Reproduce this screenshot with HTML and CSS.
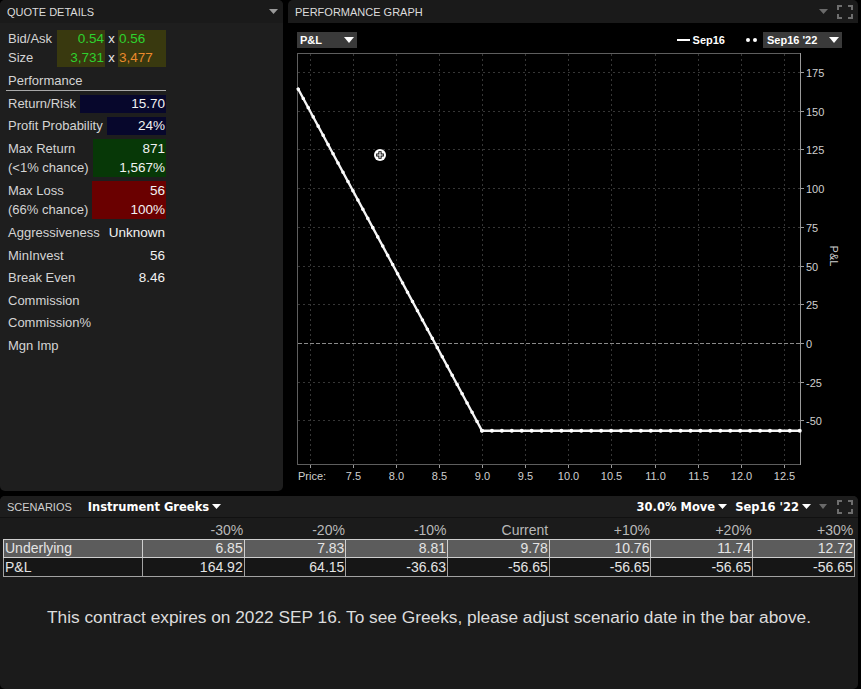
FILE: index.html
```html
<!DOCTYPE html>
<html>
<head>
<meta charset="utf-8">
<link rel="stylesheet" href="styles.css">
</head>
<body>
<div class="app">
  <div class="top">
    <section class="panel quote">
      <header class="phead">
        <span class="ptitle">QUOTE DETAILS</span>
        <svg class="tri gray" width="9" height="5" viewBox="0 0 9 5"><polygon points="0,0 9,0 4.5,5"/></svg>
      </header>
      <div class="qbody">
        <div class="ba">
          <span class="ba-l r1">Bid/Ask</span>
          <span class="ba-l r2">Size</span>
          <div class="ob ob-l"><span class="up">0.54</span><span class="up">3,731</span></div>
          <div class="bx"><span>x</span><span>x</span></div>
          <div class="ob ob-r"><span class="up">0.56</span><span class="dn">3,477</span></div>
        </div>
        <div class="perf">Performance</div>
        <div class="rows">
          <div class="row"><span class="lbl">Return/Risk</span><span class="val navy">15.70</span></div>
          <div class="row"><span class="lbl">Profit Probability</span><span class="val navy">24%</span></div>
          <div class="row two"><span class="lbl">Max Return<br>(&lt;1% chance)</span><span class="val green">871<br>1,567%</span></div>
          <div class="row two"><span class="lbl">Max Loss<br>(66% chance)</span><span class="val red">56<br>100%</span></div>
          <div class="row plain"><span class="lbl">Aggressiveness</span><span class="val">Unknown</span></div>
          <div class="row plain"><span class="lbl">MinInvest</span><span class="val">56</span></div>
          <div class="row plain"><span class="lbl">Break Even</span><span class="val">8.46</span></div>
          <div class="row plain"><span class="lbl">Commission</span><span class="val"></span></div>
          <div class="row plain"><span class="lbl">Commission%</span><span class="val"></span></div>
          <div class="row plain"><span class="lbl">Mgn Imp</span><span class="val"></span></div>
        </div>
      </div>
    </section>

    <section class="panel graph">
      <header class="phead">
        <span class="ptitle">PERFORMANCE GRAPH</span>
        <svg class="tri dim" width="9" height="5" viewBox="0 0 9 5"><polygon points="0,0 9,0 4.5,5"/></svg>
        <svg class="expand" width="16" height="14" viewBox="0 0 16 14"><path d="M1 5V1H5M11 1H15V5M15 9V13H11M5 13H1V9" fill="none" stroke="#6e6e6e" stroke-width="2"/></svg>
      </header>
      <div class="gbody">
        <div class="controls">
          <div class="dd pl">P&amp;L<svg class="tri white" width="10" height="6" viewBox="0 0 10 6"><polygon points="0,0 10,0 5,6"/></svg></div>
          <div class="legend">
            <span class="lline"></span><span class="ltext">Sep16</span>
            <span class="ldots"><i></i><i></i></span>
            <div class="dd dt">Sep16 '22<svg class="tri white" width="10" height="6" viewBox="0 0 10 6"><polygon points="0,0 10,0 5,6"/></svg></div>
          </div>
        </div>
        <svg class="plot" width="570" height="439" viewBox="288 52 570 439">
          <g stroke="#363636" stroke-width="1" stroke-dasharray="2 3">
            <line x1="310.5" y1="55" x2="310.5" y2="465"/>
            <line x1="353.5" y1="55" x2="353.5" y2="465"/>
            <line x1="396.5" y1="55" x2="396.5" y2="465"/>
            <line x1="439.5" y1="55" x2="439.5" y2="465"/>
            <line x1="482.5" y1="55" x2="482.5" y2="465"/>
            <line x1="525.5" y1="55" x2="525.5" y2="465"/>
            <line x1="568.5" y1="55" x2="568.5" y2="465"/>
            <line x1="611.5" y1="55" x2="611.5" y2="465"/>
            <line x1="655.5" y1="55" x2="655.5" y2="465"/>
            <line x1="698.5" y1="55" x2="698.5" y2="465"/>
            <line x1="741.5" y1="55" x2="741.5" y2="465"/>
            <line x1="784.5" y1="55" x2="784.5" y2="465"/>
            <line x1="298" y1="73.5" x2="800" y2="73.5"/>
            <line x1="298" y1="112.5" x2="800" y2="112.5"/>
            <line x1="298" y1="150.5" x2="800" y2="150.5"/>
            <line x1="298" y1="189.5" x2="800" y2="189.5"/>
            <line x1="298" y1="228.5" x2="800" y2="228.5"/>
            <line x1="298" y1="267.5" x2="800" y2="267.5"/>
            <line x1="298" y1="305.5" x2="800" y2="305.5"/>
            <line x1="298" y1="383.5" x2="800" y2="383.5"/>
            <line x1="298" y1="421.5" x2="800" y2="421.5"/>
          </g>
          <line x1="298" y1="344.5" x2="800" y2="344.5" stroke="#8a8a8a" stroke-width="1" stroke-dasharray="4 2"/>
          <rect x="297.5" y="54.5" width="503" height="411" fill="none" stroke="#5e5e5e"/>
          <line x1="800.5" y1="54" x2="800.5" y2="466" stroke="#9a9a9a"/>
          <g stroke="#9a9a9a" stroke-width="1">
            <line x1="801" y1="73.5" x2="804" y2="73.5"/>
            <line x1="801" y1="112.5" x2="804" y2="112.5"/>
            <line x1="801" y1="150.5" x2="804" y2="150.5"/>
            <line x1="801" y1="189.5" x2="804" y2="189.5"/>
            <line x1="801" y1="228.5" x2="804" y2="228.5"/>
            <line x1="801" y1="267.5" x2="804" y2="267.5"/>
            <line x1="801" y1="305.5" x2="804" y2="305.5"/>
            <line x1="801" y1="344.5" x2="804" y2="344.5"/>
            <line x1="801" y1="383.5" x2="804" y2="383.5"/>
            <line x1="801" y1="421.5" x2="804" y2="421.5"/>
            <line x1="310.5" y1="466" x2="310.5" y2="469"/>
            <line x1="353.5" y1="466" x2="353.5" y2="469"/>
            <line x1="396.5" y1="466" x2="396.5" y2="469"/>
            <line x1="439.5" y1="466" x2="439.5" y2="469"/>
            <line x1="482.5" y1="466" x2="482.5" y2="469"/>
            <line x1="525.5" y1="466" x2="525.5" y2="469"/>
            <line x1="568.5" y1="466" x2="568.5" y2="469"/>
            <line x1="611.5" y1="466" x2="611.5" y2="469"/>
            <line x1="655.5" y1="466" x2="655.5" y2="469"/>
            <line x1="698.5" y1="466" x2="698.5" y2="469"/>
            <line x1="741.5" y1="466" x2="741.5" y2="469"/>
            <line x1="784.5" y1="466" x2="784.5" y2="469"/>
          </g>
          <g class="ax">
            <text x="806" y="78">175</text>
            <text x="806" y="117">150</text>
            <text x="806" y="155">125</text>
            <text x="806" y="194">100</text>
            <text x="806" y="233">75</text>
            <text x="806" y="272">50</text>
            <text x="806" y="310">25</text>
            <text x="806" y="349">0</text>
            <text x="806" y="388">-25</text>
            <text x="806" y="426">-50</text>
          </g>
          <g class="ax mid">
            <text x="353.5" y="481">7.5</text>
            <text x="396.5" y="481">8.0</text>
            <text x="439.5" y="481">8.5</text>
            <text x="482.5" y="481">9.0</text>
            <text x="525.5" y="481">9.5</text>
            <text x="568.5" y="481">10.0</text>
            <text x="611.5" y="481">10.5</text>
            <text x="655.5" y="481">11.0</text>
            <text x="698.5" y="481">11.5</text>
            <text x="741.5" y="481">12.0</text>
            <text x="784.5" y="481">12.5</text>
          </g>
          <text class="ax" x="298" y="481">Price:</text>
          <text class="ax mid" x="830" y="265" transform="rotate(90 834 261)">P&amp;L</text>
          <polyline points="297.5,88.7 482,431.7 800,431.7" fill="none" stroke="#f4f4f4" stroke-width="2.4" stroke-linejoin="round"/>
          <path d="M482 431.7 L800 431.7" fill="none" stroke="#ffffff" stroke-width="4" stroke-linecap="round" stroke-dasharray="0 9.93"/>
          <path d="M482 431.7 L297.5 88.7" fill="none" stroke="#ffffff" stroke-width="3.6" stroke-linecap="round" stroke-dasharray="0 10.48"/>
          <circle cx="380" cy="156" r="6" fill="#fff"/>
          <path d="M380 152.2V159.8M376.2 156H383.8" stroke="#000" stroke-width="3.2"/>
          <path d="M380 153V159M377 156H383" stroke="#fff" stroke-width="1.2"/>
        </svg>
      </div>
    </section>
  </div>

  <section class="panel scen">
    <header class="shead">
      <span class="stitle">SCENARIOS</span>
      <span class="sdrop first">Instrument Greeks<svg class="tri white" width="9" height="5" viewBox="0 0 9 5"><polygon points="0,0 9,0 4.5,5"/></svg></span>
      <span class="spacer"></span>
      <span class="sdrop">30.0% Move<svg class="tri white" width="9" height="5" viewBox="0 0 9 5"><polygon points="0,0 9,0 4.5,5"/></svg></span>
      <span class="sdrop">Sep16 '22<svg class="tri white" width="9" height="5" viewBox="0 0 9 5"><polygon points="0,0 9,0 4.5,5"/></svg></span>
      <svg class="tri dim sm" width="8" height="5" viewBox="0 0 8 5"><polygon points="0,0 8,0 4,5"/></svg>
      <svg class="expand" width="16" height="14" viewBox="0 0 16 14"><path d="M1 5V1H5M11 1H15V5M15 9V13H11M5 13H1V9" fill="none" stroke="#6e6e6e" stroke-width="2"/></svg>
    </header>
    <table class="stable">
      <colgroup><col class="c0"><col class="c"><col class="c"><col class="c"><col class="c"><col class="c"><col class="c"><col class="c"></colgroup>
      <tr class="hrow"><td></td><td>-30%</td><td>-20%</td><td>-10%</td><td>Current</td><td>+10%</td><td>+20%</td><td>+30%</td></tr>
      <tr class="urow"><td>Underlying</td><td>6.85</td><td>7.83</td><td>8.81</td><td>9.78</td><td>10.76</td><td>11.74</td><td>12.72</td></tr>
      <tr class="prow"><td>P&amp;L</td><td>164.92</td><td>64.15</td><td>-36.63</td><td>-56.65</td><td>-56.65</td><td>-56.65</td><td>-56.65</td></tr>
    </table>
    <p class="msg">This contract expires on 2022 SEP 16. To see Greeks, please adjust scenario date in the bar above.</p>
  </section>
</div>
</body>
</html>
```
FILE: styles.css
```css
html, body {
  margin: 0;
  padding: 0;
  background: #000;
}
body {
  width: 861px;
  height: 689px;
  overflow: hidden;
  font-family: "Liberation Sans", Arial, sans-serif;
  color: #d4d4d4;
}
.app {
  display: flex;
  flex-direction: column;
  gap: 5px;
  padding-right: 3px;
}
.top {
  display: flex;
  gap: 5px;
  height: 491px;
}
.panel {
  border-radius: 5px;
  overflow: hidden;
  display: flex;
  flex-direction: column;
}
.quote {
  width: 283px;
  background: #1e1e1e;
}
.graph {
  flex: 1;
  background: #000;
}
.phead {
  height: 23px;
  flex: none;
  background: #1a1a1a;
  display: flex;
  align-items: center;
  padding: 0 5px 0 7px;
  font-size: 11px;
  color: #dcdcdc;
}
.ptitle {
  flex: 1;
  padding-top: 1px;
}
.tri {
  display: block;
  flex: none;
}
.tri.gray { fill: #9a9a9a; }
.tri.dim { fill: #6a6a6a; }
.tri.white { fill: #fff; }
.graph .phead .tri.dim { margin-right: 9px; }
.expand { display: block; flex: none; }

/* quote body */
.qbody {
  padding: 7px 0 0 8px;
  width: 158px;
}
.ba {
  display: grid;
  grid-template-columns: 49px 48px 13px 48px;
  grid-template-rows: 18.5px 18.5px;
  font-size: 13px;
}
.ba-l { grid-column: 1; line-height: 18.5px; }
.ba-l.r1 { grid-row: 1; }
.ba-l.r2 { grid-row: 2; }
.ob {
  grid-row: 1 / 3;
  background: #39390f;
  display: flex;
  flex-direction: column;
  font-size: 13.5px;
  line-height: 18.5px;
}
.ob-l { grid-column: 2; text-align: right; padding-right: 1px; }
.ob-r { grid-column: 4; text-align: left; padding-left: 1px; }
.bx {
  grid-column: 3;
  grid-row: 1 / 3;
  display: flex;
  flex-direction: column;
  align-items: center;
  line-height: 18.5px;
  font-size: 13px;
  color: #e8e8e8;
}
.up { color: #2ed12e; }
.dn { color: #ea8a2c; }
.perf {
  margin: 5px 0 0 -2px;
  padding-left: 2px;
  font-size: 13px;
  line-height: 18px;
  border-bottom: 1px solid #a8a8a8;
}
.rows {
  display: flex;
  flex-direction: column;
  gap: 4px;
  margin-top: 4px;
}
.row {
  display: flex;
  font-size: 13px;
  line-height: 18px;
}
.row.two { line-height: 19px; }
.row.plain { height: 18.6px; line-height: 19px; }
.lbl { white-space: nowrap; }
.val {
  flex: 1;
  margin-left: 4px;
  text-align: right;
  padding-right: 1px;
  font-size: 13.5px;
  color: #f2f2f2;
}
.val.navy { background: #07072c; }
.val.green { background: #073807; }
.val.red { background: #6a0000; }

/* graph body */
.gbody {
  display: flex;
  flex-direction: column;
}
.controls {
  display: flex;
  justify-content: space-between;
  align-items: center;
  padding: 9px 16px 0 9px;
  height: 16px;
}
.dd {
  height: 16px;
  background: #3a3a3a;
  display: flex;
  align-items: center;
  justify-content: space-between;
  font-weight: bold;
  font-size: 11px;
  color: #fff;
  box-sizing: border-box;
}
.dd.pl { width: 60px; padding: 0 3px 0 3px; }
.dd.dt { width: 79px; padding: 0 3px 0 4px; }
.legend {
  display: flex;
  align-items: center;
}
.lline {
  width: 13px;
  height: 2px;
  background: #fff;
  margin-right: 3px;
}
.ltext {
  font-weight: bold;
  font-size: 11px;
  color: #fff;
}
.ldots {
  display: flex;
  gap: 3px;
  margin: 0 6px 0 21px;
}
.ldots i {
  width: 4px;
  height: 4px;
  border-radius: 50%;
  background: #fff;
}
.plot {
  display: block;
  margin-top: 3px;
}
.ax {
  font-family: "Liberation Sans", Arial, sans-serif;
  font-size: 11px;
  fill: #cfcfcf;
}
.ax.mid { text-anchor: middle; }

/* scenarios */
.scen {
  height: 193px;
  background: #1b1b1b;
}
.shead {
  height: 21px;
  flex: none;
  background: #1d1d1d;
  border-bottom: 1px solid #111;
  display: flex;
  align-items: center;
  padding: 0 5px 0 7px;
}
.stitle {
  font-size: 11px;
  color: #d0d0d0;
}
.sdrop {
  display: flex;
  align-items: center;
  gap: 3px;
  font-family: "DejaVu Sans", Verdana, sans-serif;
  font-weight: bold;
  font-size: 11.5px;
  color: #fff;
  margin-right: 8px;
}
.sdrop.first { margin-left: 16px; }
.spacer { flex: 1; }
.tri.sm { margin-right: 10px; }
.stable {
  border-collapse: collapse;
  margin: 4px 0 0 3px;
  table-layout: fixed;
  width: 851px;
  font-size: 14px;
}
.c0 { width: 139px; }
.c { width: 101.7px; }
.stable td {
  text-align: right;
  padding: 0 1px 0 0;
  white-space: nowrap;
}
.stable td:first-child {
  text-align: left;
  padding-left: 1px;
}
.hrow td {
  height: 17px;
  color: #b8b8b8;
  line-height: 17px;
}
.urow td {
  height: 17px;
  line-height: 17px;
  background: #5c5c5c;
  border: 1px solid #cfcfcf;
  color: #e4e4e4;
}
.prow td {
  height: 18px;
  line-height: 18px;
  background: #161616;
  border: 1px solid #a2a2a2;
  color: #e4e4e4;
}
.msg {
  margin: 30px 0 0 0;
  text-align: center;
  font-size: 17.3px;
  line-height: 20px;
  color: #dcdcdc;
}
```
